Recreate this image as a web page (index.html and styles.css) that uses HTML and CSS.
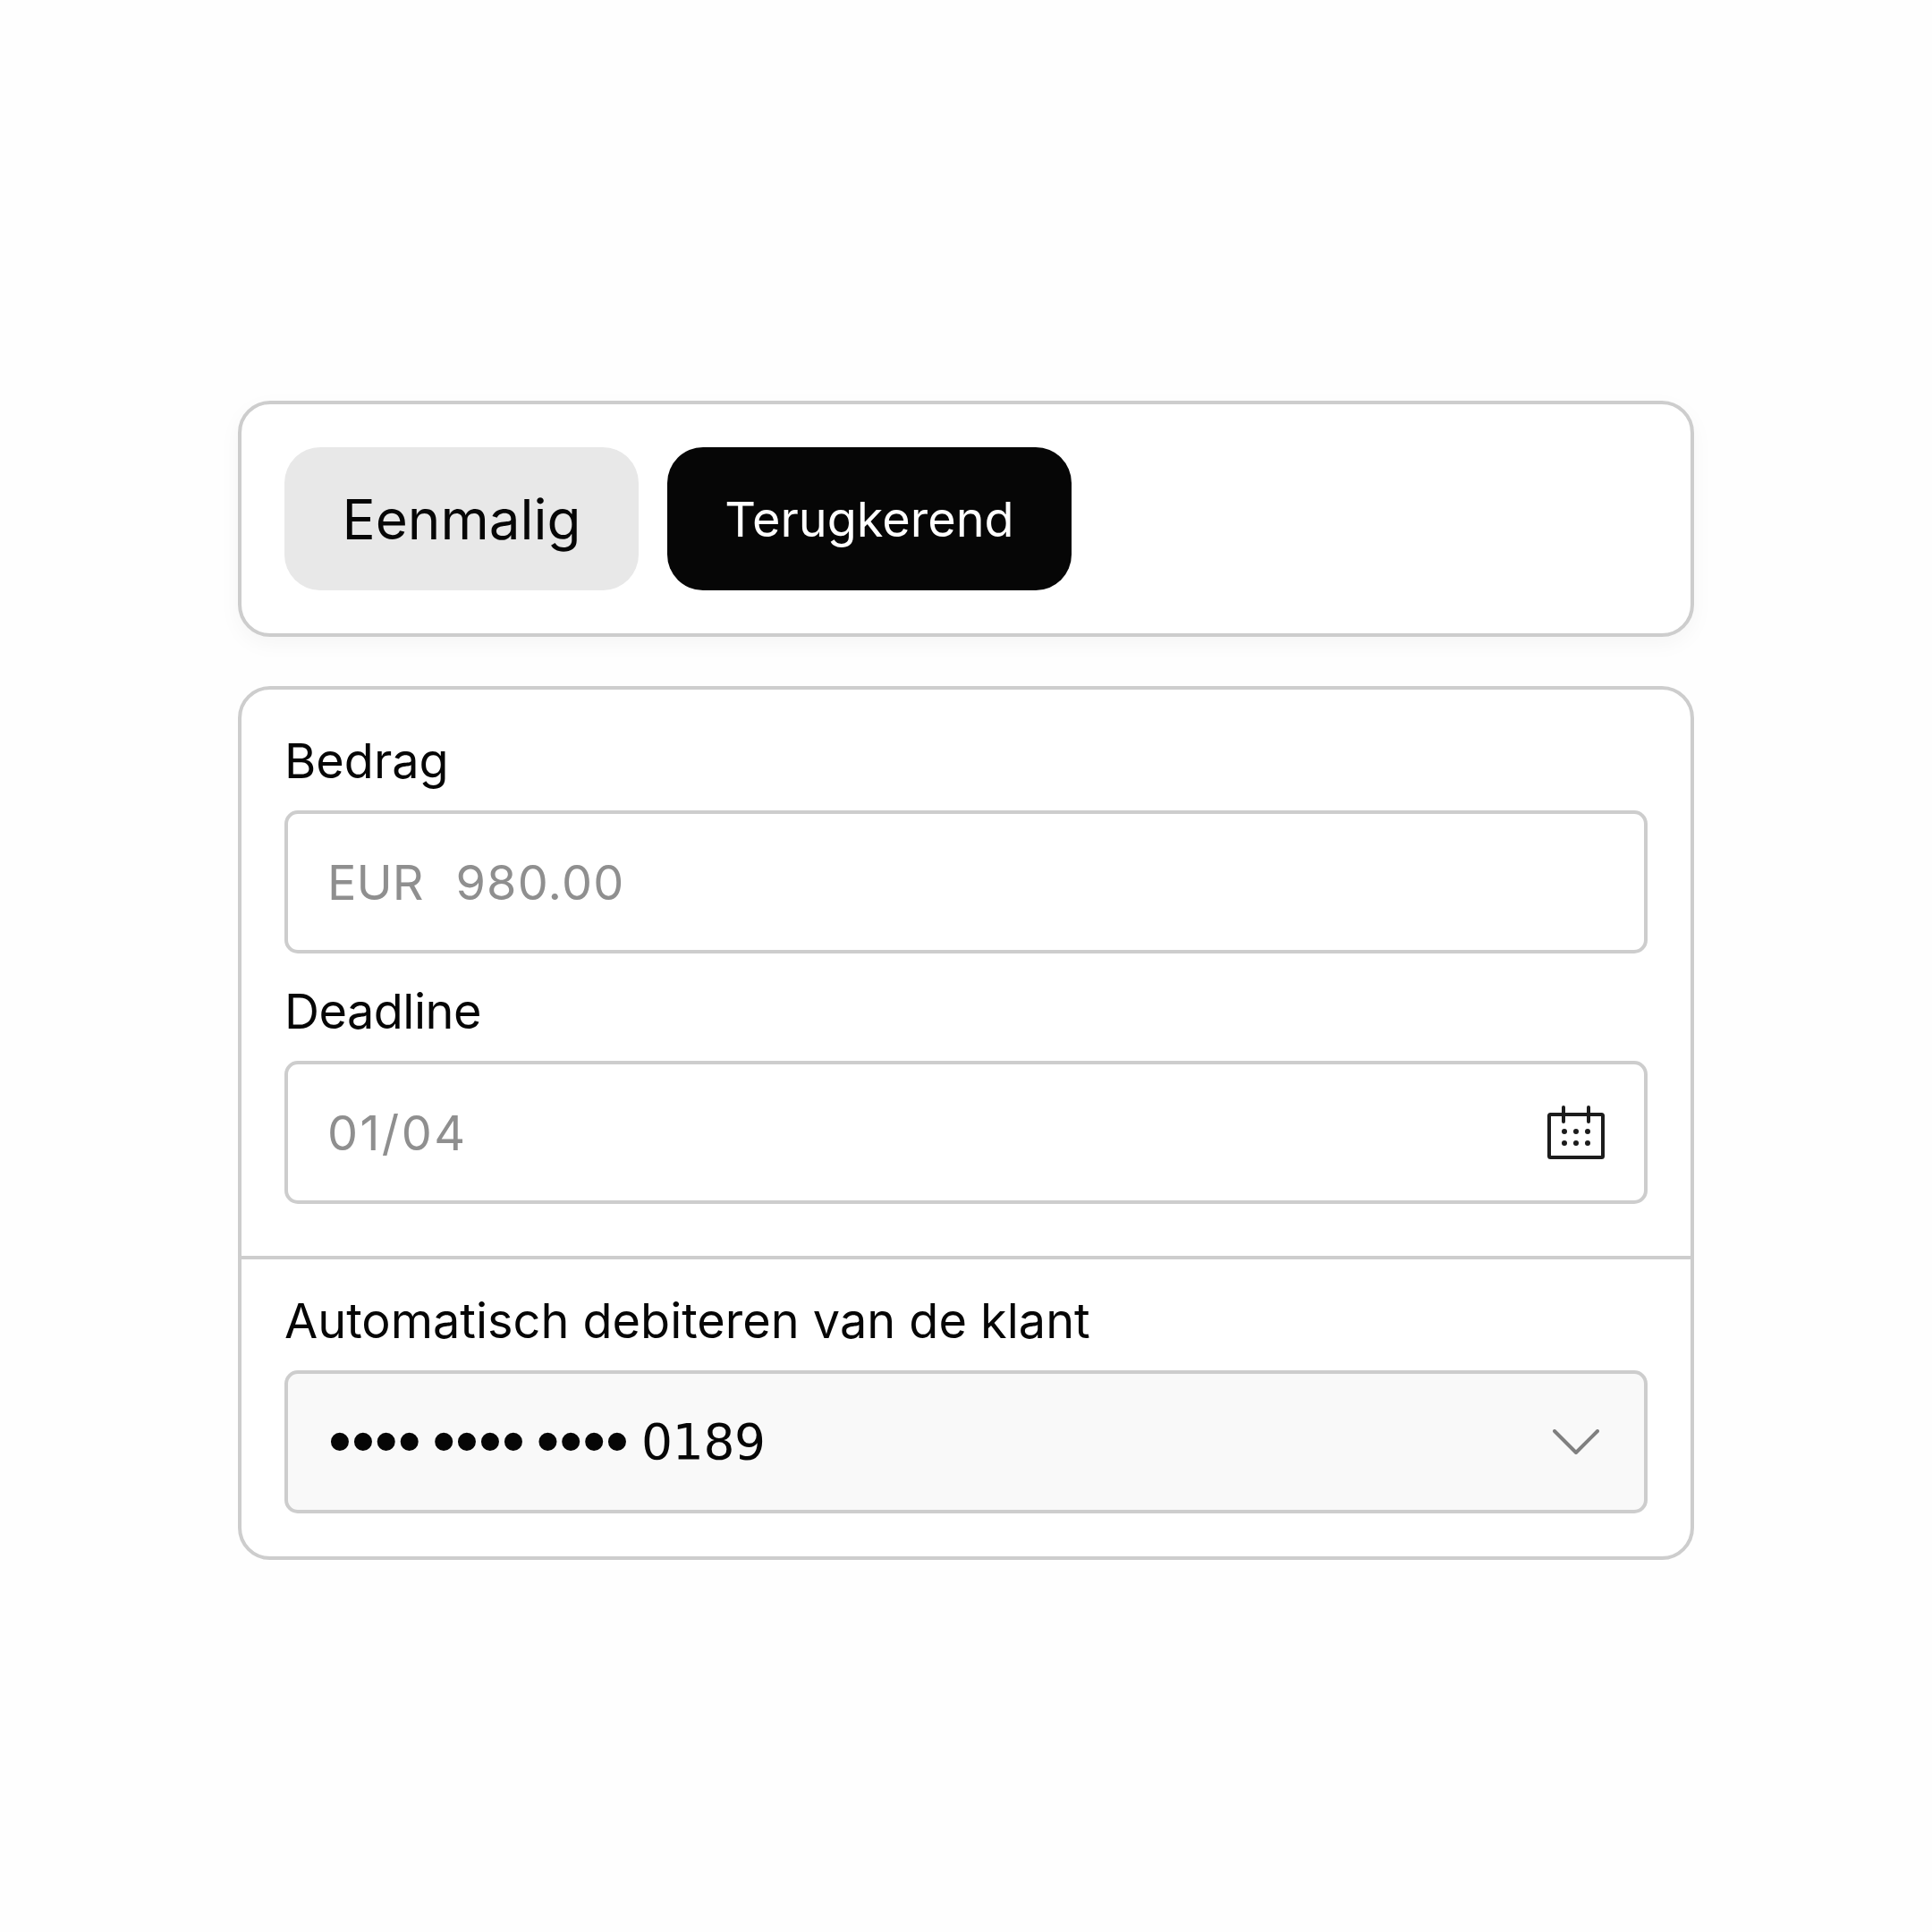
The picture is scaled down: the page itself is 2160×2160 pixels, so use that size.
FILE: index.html
```html
<!DOCTYPE html>
<html lang="nl">
<head>
<meta charset="utf-8">
<title>Betaling</title>
<link rel="stylesheet" href="styles.css">
</head>
<body>
<main class="stack">
  <section class="card tabs">
    <button class="tab tab-idle">Eenmalig</button>
    <button class="tab tab-active">Terugkerend</button>
  </section>
  <section class="card form">
    <div class="group">
      <div class="field">
        <label class="label">Bedrag</label>
        <div class="input"><span class="muted"><span class="cur">EUR</span>980.00</span></div>
      </div>
      <div class="field">
        <label class="label label-tight">Deadline</label>
        <div class="input">
          <span class="muted muted-date">01/04</span>
          <svg class="icon-cal" width="64" height="60" viewBox="0 0 64 60" fill="none" stroke="#1c1c1c" stroke-width="4" stroke-linecap="round" stroke-linejoin="round">
            <rect x="2" y="10" width="60" height="48" rx="1.5"/>
            <path d="M18 2v16M46 2v16"/>
            <g fill="#1c1c1c" stroke="none">
              <circle cx="19" cy="29" r="3"/><circle cx="32" cy="29" r="3"/><circle cx="45" cy="29" r="3"/>
              <circle cx="19" cy="42" r="3"/><circle cx="32" cy="42" r="3"/><circle cx="45" cy="42" r="3"/>
            </g>
          </svg>
        </div>
      </div>
    </div>
    <div class="group group-last">
      <div class="field">
        <label class="label">Automatisch debiteren van de klant</label>
        <div class="input input-select">
          <span class="card-no"><span class="dots">•••• •••• ••••</span><span class="digits">0189</span></span>
          <svg class="icon-chev" width="52" height="28" viewBox="0 0 52 28" fill="none" stroke="#808080" stroke-width="4" stroke-linecap="round" stroke-linejoin="round">
            <path d="M2 2l24 24L50 2"/>
          </svg>
        </div>
      </div>
    </div>
  </section>
</main>
</body>
</html>
```
FILE: styles.css
```css
* { box-sizing: border-box; }
html, body { margin: 0; background: #fefefe; }
body { width: 2160px; height: 2160px; font-family: Inter, "Liberation Sans", sans-serif; color: #060606; }
.stack { display: flex; flex-direction: column; gap: 55px; width: 1628px; margin-left: 266px; padding-top: 448px; }
.card { border: 4px solid #cdcdcd; border-radius: 36px; background: #fff; }
.tabs { display: flex; gap: 32px; padding: 48px; box-shadow: 0 8px 24px rgba(0,0,0,.04); }
.tab { width: 396px; height: 160px; padding: 0; border: 0; border-radius: 40px; font-family: inherit; }
.tab-idle { background: #e8e8e8; color: #060606; font-size: 62px; }
.tab-active { width: 452px; background: #060606; color: #fff; font-size: 54px; }
.group { display: flex; flex-direction: column; gap: 30px; padding: 45px 48px 58px; border-bottom: 4px solid #cdcdcd; }
.group-last { border-bottom: 0; padding: 34px 48px 48px; }
.field { display: flex; flex-direction: column; gap: 20px; }
.label { font-size: 54px; line-height: 70px; color: #060606; }
.label-tight { letter-spacing: -.5px; }
.input { display: flex; align-items: center; justify-content: space-between; height: 160px; padding: 0 44px; border: 4px solid #cdcdcd; border-radius: 15px; background: #fff; }
.input-select { background: #f9f9f9; }
.muted { font-size: 54px; letter-spacing: 1.2px; color: #8f8f8f; }
.muted-date { letter-spacing: 2.4px; }
.cur { margin-right: 36px; letter-spacing: 0; }
.card-no { display: flex; align-items: center; gap: 14px; padding-left: 1px; }
.dots { font-family: "Liberation Sans", sans-serif; font-size: 74px; line-height: 60px; word-spacing: -8px; }
.digits { font-family: "DejaVu Sans", sans-serif; font-size: 55px; letter-spacing: -.3px; }
.icon-chev { margin-right: 6px; }
```
